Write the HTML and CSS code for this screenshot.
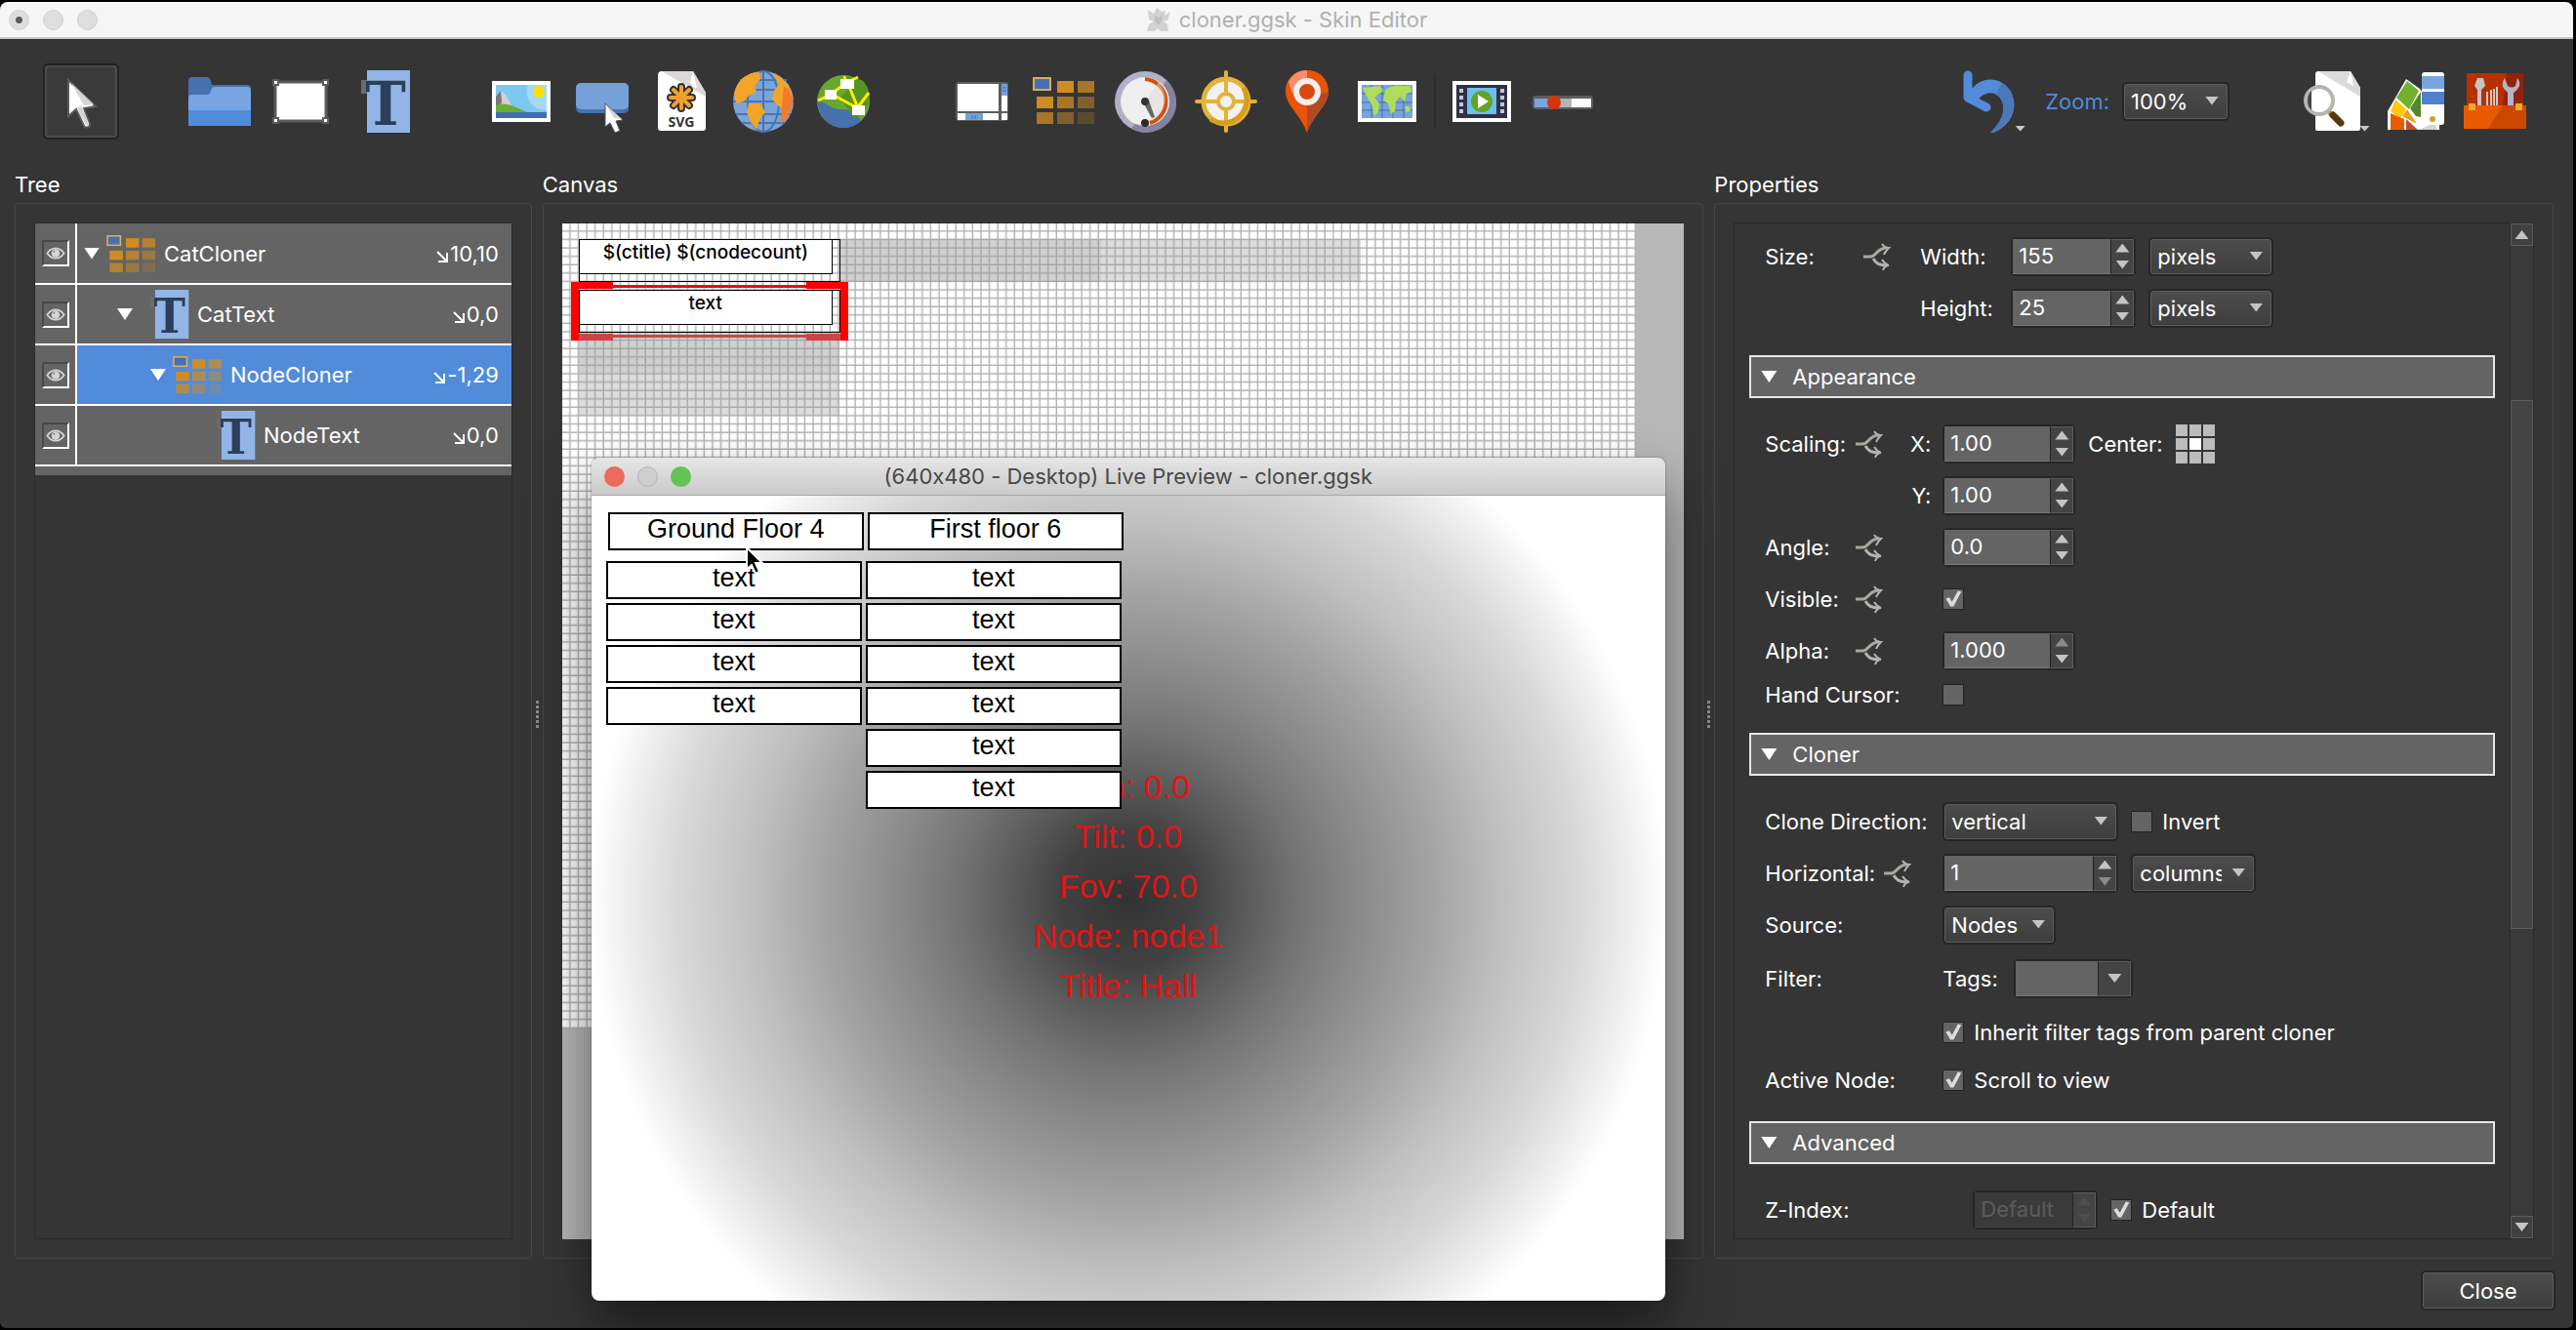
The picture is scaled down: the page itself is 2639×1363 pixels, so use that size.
FILE: index.html
```html
<!DOCTYPE html>
<html lang="en">
<head>
    <meta charset="UTF-8">
    <meta name="viewport" content="width=device-width, initial-scale=1.0">
    <title>cloner.ggsk - Skin Editor</title>
    <link rel="stylesheet" href="styles.css">
</head>
<body>
    <!-- Shared icons -->
    <svg class="defs" width="0" height="0" aria-hidden="true">
        <symbol id="icon-cloner" viewBox="0 0 64 48">
            <g fill="#d08c22">
                <rect x="25" y="4" width="17" height="12"/>
                <rect x="46" y="4" width="17" height="12" opacity=".75"/>
                <rect x="4" y="20" width="17" height="12"/>
                <rect x="25" y="20" width="17" height="12" opacity=".75"/>
                <rect x="46" y="20" width="17" height="12" opacity=".5"/>
                <rect x="4" y="36" width="17" height="12" opacity=".75"/>
                <rect x="25" y="36" width="17" height="12" opacity=".5"/>
                <rect x="46" y="36" width="17" height="12" opacity=".25"/>
            </g>
            <rect x="1" y="1" width="17" height="12" fill="#4670b0" stroke="#d8ac60" stroke-width="2"/>
        </symbol>
        <symbol id="icon-text" viewBox="0 0 52 64">
            <rect x="8" y="0" width="44" height="64" fill="#92b5e8"/>
            <rect x="2" y="10" width="6" height="14" fill="#6c6c6c"/>
            <text x="27" y="56" text-anchor="middle" class="icon-t">T</text>
        </symbol>
        <symbol id="icon-branch" viewBox="0 0 30 28">
            <path d="M1 14h7c7 0 6-9 17-9" fill="none" stroke="#a8a89c" stroke-width="3"/>
            <path d="M11 16c3 5 6 7 14 7" fill="none" stroke="#b4b4b4" stroke-width="3"/>
            <path d="M20 1c2 3 4 4 7 4-2 2-4 4-5 7M20 17c2 3 4 5 7 6-3 0-5 2-6 5" fill="none" stroke="#b4b4b4" stroke-width="2"/>
        </symbol>
        <symbol id="icon-eye" viewBox="0 0 28 26">
            <path d="M4 13C9 5 19 5 24 13C19 21 9 21 4 13z" fill="none" stroke="#d4d4d4" stroke-width="2"/>
            <circle cx="14" cy="13" r="5" fill="#d4d4d4"/>
            <circle cx="12" cy="11" r="1" fill="#666"/>
        </symbol>
        <symbol id="icon-arrow" viewBox="0 0 16 16">
            <path d="M3 3l9 9M13 4v9H4" fill="none" stroke="#fff" stroke-width="2"/>
        </symbol>
    </svg>

    <div class="window">
        <header class="titlebar">
            <div class="lights"><span class="edited"></span><span></span><span></span></div>
            <h1 class="title">
                <svg width="26" height="26" viewBox="0 0 26 26" fill="#d2d2d2"><path d="M2 3l6 4 3-6 5 4 4-1-1 5 6-4-3 9-4 1 4 3 1 7h-8l-3-3-3 3H1l2-7 5-3-5-2z"/><path d="M9 9l4 2 4-3-1 7-3 4-4-4z" fill="#c0c0c0"/></svg>
                cloner.ggsk - Skin Editor
            </h1>
        </header>

        <nav class="toolbar" aria-label="Elements">
            <div class="tools">
                <button class="tool active" type="button" aria-label="Select">
                    <svg viewBox="0 0 64 64"><path d="M19 10v37l8-7 8 17c2 3 7 1 6-2l-6-16 12-2z" fill="#fff" stroke="#5c5c5c" stroke-width="2"/><path d="M22 13l13 23 10-1zM28 39l9 17c2 1 3 0 3-2l-8-18z" fill="#d8d4d4"/></svg>
                </button>
            </div>
            <div class="tools">
                <button class="tool" type="button" aria-label="Container">
                    <svg viewBox="0 0 64 64"><path d="M0 11q0-4 4-4h14q4 0 5 4l1 4h36q4 0 4 4v37H0z" fill="#4670b0"/><path d="M0 57V29q0-4 4-4h15q3 0 4-4t4-4h33q4 0 4 4v36z" fill="#78a4e2"/><path d="M0 41h64v16H0z" fill="#528bda"/></svg>
                </button>
                <button class="tool" type="button" aria-label="Rectangle">
                    <svg viewBox="0 0 64 64"><rect x="6" y="12" width="52" height="40" fill="#fff" stroke="#5c5c5c" stroke-width="3"/><g fill="#fff" stroke="#5c5c5c" stroke-width="2"><rect x="4" y="10" width="5" height="5"/><rect x="55" y="10" width="5" height="5"/><rect x="4" y="49" width="5" height="5"/><rect x="55" y="49" width="5" height="5"/></g></svg>
                </button>
                <button class="tool" type="button" aria-label="Text">
                    <svg viewBox="0 0 64 64"><use href="#icon-text" x="9" width="52" height="64"/></svg>
                </button>
            </div>
            <div class="tools">
                <button class="tool" type="button" aria-label="Image">
                    <svg viewBox="0 0 64 64"><rect x="3" y="11" width="60" height="42" fill="#fff"/><rect x="7" y="15" width="52" height="34" fill="#7cc8f2"/><path d="M40 15h19v26A19 19 0 0 1 40 15z" fill="#a4daf6"/><circle cx="51" cy="22" r="6" fill="#ffe000"/><path d="M7 28l5-7 5 4 11 20H7z" fill="#d0d0d0"/><path d="M7 27l5-6 1 12-6 7z" fill="#777"/><path d="M7 36c10-4 18 1 34 8H7z" fill="#6aae2e"/><path d="M7 43h52v6H7z" fill="#3f6fb2"/></svg>
                </button>
                <button class="tool" type="button" aria-label="Button">
                    <svg viewBox="0 0 64 64"><rect x="6" y="13" width="54" height="31" rx="5" fill="#4670b0"/><rect x="6" y="13" width="54" height="27" rx="5" fill="#75a0d8"/><path d="M36 34v24l5-4 5 10 5-2-4-10 7-1z" fill="#fff" stroke="#555" stroke-width="1"/><path d="M37 36l8 13 8 1z" fill="#d8d4d4"/></svg>
                </button>
                <button class="tool" type="button" aria-label="SVG">
                    <svg viewBox="0 0 64 64"><path d="M7 5q0-4 4-4h32l13 22v36q0 3-3 3H10q-3 0-3-3z" fill="#fff"/><path d="M11 1h32l13 22v4z" fill="#dcd8d8"/><path d="M43 1l-3 11q2 6 7 6z" fill="#fff"/>
                        <g stroke="#333" stroke-width="8" stroke-linecap="round"><path d="M31 17v22M20 28h22M23 20l16 16M39 20L23 36"/></g><g stroke="#f0a030" stroke-width="4" stroke-linecap="round"><path d="M31 17v22M20 28h22M23 20l16 16M39 20L23 36"/></g>
                        <text x="31" y="58" text-anchor="middle" class="icon-svg">SVG</text></svg>
                </button>
                <button class="tool" type="button" aria-label="Web element">
                    <svg viewBox="0 0 64 64"><circle cx="32" cy="32" r="31" fill="#7aa4da"/><g fill="none" stroke="#4c74ae" stroke-width="2"><path d="M32 1v62M3 20h58M1 32h62M4 45h56M8 10h48M10 54h44"/><ellipse cx="32" cy="32" rx="16" ry="31"/></g><path d="M2 24C5 10 15 2 28 2l1 7-6 7 2 6-8 4-5 6-8 2z" fill="#f4a426"/><path d="M17 34l12 0 5 9-6 7-3 11-6-8-4-10z" fill="#f4a426"/><path d="M41 3c12 4 19 13 21 24l-5 14-8-3-8-8 2-9 5-7z" fill="#f4a426"/><path d="M53 16c5 3 9 9 9 16-1 10-5 18-12 23l1-17z" fill="#ee7c2c"/></svg>
                </button>
                <button class="tool" type="button" aria-label="Node marker">
                    <svg viewBox="0 0 64 64"><circle cx="31" cy="32" r="27" fill="#66a82c"/><path d="M4 32c8-2 14 10 27 8 8 0 15 6 18 12C37 64 8 62 4 32z" fill="#4670ae"/><path d="M30 6l8 12-10 10 14 22c18-10 20-30 8-40z" fill="#559420"/><path d="M5 31l13-6 17-13 11 27M34 14l-2-8M34 13l12-6M45 39l12-16M18 24l28 15" fill="none" stroke="#ffee00" stroke-width="3"/><g fill="#fff"><rect x="12" y="20" width="12" height="10"/><rect x="28" y="9" width="14" height="10"/><rect x="40" y="36" width="13" height="10"/></g></svg>
                </button>
            </div>
            <div class="tools">
                <button class="tool" type="button" aria-label="Scroll area">
                    <svg viewBox="0 0 64 64"><rect x="4" y="12" width="54" height="40" rx="3" fill="#5c5c5c"/><g fill="#fff"><rect x="6" y="14" width="42" height="28"/><rect x="51" y="14" width="6" height="28"/><rect x="6" y="44" width="42" height="7"/><rect x="51" y="44" width="6" height="7"/></g><path d="M51 14h6v12h-6zM14 44h18v7H14z" fill="#75a0d8"/><path d="M52 18h4M52 21h4M21 46v4M24 46v4" stroke="#3f6fb2"/></svg>
                </button>
                <button class="tool" type="button" aria-label="Cloner">
                    <svg viewBox="0 0 64 64"><use href="#icon-cloner" x="0" y="7" width="64" height="48"/></svg>
                </button>
                <button class="tool" type="button" aria-label="Gauge">
                    <svg viewBox="0 0 64 64"><circle cx="32" cy="32" r="31" fill="#b0b0c8"/><path d="M54 10A31 31 0 0 1 18 60z" fill="#8484a0"/><circle cx="32" cy="32" r="25" fill="#f0eeee"/><path d="M32 9a23 23 0 0 1 5 45" fill="none" stroke="#d4500c" stroke-width="4"/><path d="M32 32L46 12q16 22-7 40z" fill="#dcdada" opacity=".5"/><path d="M30 33l9 16 3-1-6-17z" fill="#666"/><circle cx="32" cy="32" r="4" fill="#333"/><circle cx="32" cy="54" r="4" fill="#2c2c2c"/></svg>
                </button>
                <button class="tool" type="button" aria-label="Target">
                    <svg viewBox="0 0 64 64"><circle cx="32" cy="32" r="23" fill="#f4f2f0" stroke="#e2b23c" stroke-width="5"/><path d="M32 2v60M2 32h60" stroke="#e2b23c" stroke-width="4" stroke-linecap="round"/><path d="M50 18a24 24 0 0 1-34 32" fill="none" stroke="#d89c18" stroke-width="5"/><circle cx="32" cy="32" r="8" fill="#f4f2f0" stroke="#e2b23c" stroke-width="4"/></svg>
                </button>
                <button class="tool" type="button" aria-label="Map pin">
                    <svg viewBox="0 0 64 64"><path d="M32 0c13 0 22 9 22 22 0 14-16 24-22 42C26 46 10 36 10 22 10 9 19 0 32 0z" fill="#e85408"/><path d="M54 22c0 14-16 24-22 42V36l15-12z" fill="#b04a22"/><path d="M13 12Q19 0 32 0v10L17 24z" fill="#ff8c70"/><circle cx="32" cy="22" r="11" fill="#d84a10" stroke="#f4eeee" stroke-width="6"/></svg>
                </button>
                <button class="tool" type="button" aria-label="Map">
                    <svg viewBox="0 0 64 64"><rect x="1" y="11" width="60" height="42" fill="#fff"/><rect x="5" y="15" width="52" height="34" fill="#78a4d8"/><path d="M15 15v34M26 15v34M37 15v34M48 15v34M5 24h52M5 33h52M5 41h52" stroke="#4670ae"/><path d="M6 18l18-2 3 5-9 7 5 6-1 9-4 4-3-12-6-10zM29 20l8-4 18 0 1 6-5 2-2 8-5-5-4 5-1 10-4 3-3-11-5-3zM49 37l5 0 1 5-5 1z" fill="#aedc5c"/></svg>
                </button>
            </div>
            <div class="separator"></div>
            <div class="tools">
                <button class="tool" type="button" aria-label="Video">
                    <svg viewBox="0 0 64 64"><rect x="2" y="11" width="60" height="42" fill="#fff"/><rect x="6" y="15" width="52" height="34" fill="#30304a"/><path d="M11 19v28M53 19v28" stroke="#c4c4d4" stroke-width="4" stroke-dasharray="4 3"/><rect x="17" y="18" width="30" height="27" fill="#6cc0ec"/><circle cx="32" cy="32" r="11" fill="#62a424"/><path d="M28 25l11 7-11 7z" fill="#fff"/></svg>
                </button>
                <button class="tool" type="button" aria-label="Seekbar">
                    <svg viewBox="0 0 64 64"><rect x="1" y="26" width="62" height="14" rx="3" fill="#5c5c5c"/><rect x="3" y="29" width="58" height="9" fill="#fff"/><path d="M3 29h20v9H3z" fill="#78a4e2"/><path d="M23 29h18v9H23z" fill="#b4b4b4"/><ellipse cx="23" cy="33" rx="7" ry="7" fill="#d83404"/></svg>
                </button>
            </div>

            <div class="tools tools-right">
                <button class="tool has-menu" type="button" aria-label="Undo">
                    <svg viewBox="0 0 64 64"><path d="M12 24C22 4 46 6 55 22C65 42 52 60 32 66C45 54 50 42 46 32C41 20 29 21 20 31z" fill="#528bda"/><path d="M46 13C64 24 64 54 32 66C45 54 50 42 46 32Q43 26 39 25z" fill="#4a78b8"/><path d="M11 5v23l19 10" fill="none" stroke="#528bda" stroke-width="9" stroke-linecap="round" stroke-linejoin="round"/></svg>
                </button>
                <label class="zoom-label" for="zoom">Zoom:</label>
                <span class="select zoom-select"><select id="zoom"><option>100%</option></select></span>
                <button class="tool has-menu" type="button" aria-label="Preview">
                    <svg viewBox="0 0 64 64"><path d="M14 4q0-3 3-3h33l10 17v42q0 2-2 2H16q-2 0-2-2z" fill="#fff"/><path d="M17 1h33l10 17v9z" fill="#dcdada"/><path d="M50 1l-4 11 7 4z" fill="#fff"/><circle cx="18" cy="31" r="14" fill="#fff" stroke="#b4b4b0" stroke-width="4"/><path d="M10 21v20q-4-4-4-10t4-10z" fill="#444"/><path d="M28 43l5 4" stroke="#c0962c" stroke-width="5"/><path d="M32 46l8 8" stroke="#5a3810" stroke-width="7" stroke-linecap="round"/></svg>
                </button>
                <button class="tool" type="button" aria-label="Colors">
                    <svg viewBox="0 0 64 64"><path d="M5 61V42L24 9l14 10 20 30v12z" fill="#fff"/><path d="M25 11l12 10-10 19-13-12z" fill="#72b030"/><path d="M39 22v26l-5-1-6-8z" fill="#54862a"/><path d="M13 30l11 10-6 9-10-7z" fill="#ffc800"/><path d="M25 40l10 15-15-8z" fill="#e8a01c"/><path d="M8 44l14 6v11H8z" fill="#e85c08"/><path d="M24 50l12 11H24z" fill="#c05030"/><path d="M37 61l18-8v8z" fill="#d4d4d4"/><rect x="40" y="2" width="23" height="54" rx="3" fill="#fff"/><path d="M40 6h23v13H40z" fill="#78a4e2"/><path d="M40 22h23v13H40z" fill="#5080d0"/><circle cx="51" cy="50" r="3" fill="#d8a020"/></svg>
                </button>
                <button class="tool" type="button" aria-label="Toolbox">
                    <svg viewBox="0 0 64 64"><path d="M3 3h58v33H3z" fill="#b83000"/><path d="M44 3h17v33H40z" fill="#902408"/><path d="M14 8h6l2 8-4 4v16h-4V20l-3-4z" fill="#c8c4c4"/><path d="M24 22v14M28 20v16M31 19v17M34 17v19" stroke="#d0c8c8" stroke-width="2"/><path d="M42 8q-6 8 3 15v13h6V23q10-7 4-15l-2 8q-4 3-8 0z" fill="#b4b4cc"/><path d="M0 36h64v24H0z" fill="#e85a00"/><path d="M40 36h24v24H25z" fill="#cc4800"/><path d="M5 34h7v7H5zM53 34h7v7h-7z" fill="#f0a828"/></svg>
                </button>
            </div>
        </nav>

        <main class="panels">
            <section class="panel">
                <h2>Tree</h2>
                <div class="group">
                    <div class="well">
                        <table class="tree">
                            <tr>
                                <td class="eye"><button type="button" aria-label="Toggle CatCloner"><svg><use href="#icon-eye"/></svg></button></td>
                                <td><div class="node level-0"><span class="twisty"></span><svg class="node-cloner"><use href="#icon-cloner"/></svg>CatCloner</div></td>
                                <td class="pos"><svg><use href="#icon-arrow"/></svg>10,10</td>
                            </tr>
                            <tr>
                                <td class="eye"><button type="button" aria-label="Toggle CatText"><svg><use href="#icon-eye"/></svg></button></td>
                                <td><div class="node level-1"><span class="twisty"></span><svg class="node-text"><use href="#icon-text"/></svg>CatText</div></td>
                                <td class="pos"><svg><use href="#icon-arrow"/></svg>0,0</td>
                            </tr>
                            <tr class="selected">
                                <td class="eye"><button type="button" aria-label="Toggle NodeCloner"><svg><use href="#icon-eye"/></svg></button></td>
                                <td><div class="node level-2"><span class="twisty"></span><svg class="node-cloner"><use href="#icon-cloner"/></svg>NodeCloner</div></td>
                                <td class="pos"><svg><use href="#icon-arrow"/></svg>-1,29</td>
                            </tr>
                            <tr>
                                <td class="eye"><button type="button" aria-label="Toggle NodeText"><svg><use href="#icon-eye"/></svg></button></td>
                                <td><div class="node level-3"><span class="twisty leaf"></span><svg class="node-text"><use href="#icon-text"/></svg>NodeText</div></td>
                                <td class="pos"><svg><use href="#icon-arrow"/></svg>0,0</td>
                            </tr>
                        </table>
                        <div class="tree-end"></div>
                    </div>
                </div>
            </section>

            <div class="splitter"></div>

            <section class="panel">
                <h2>Canvas</h2>
                <div class="group">
                    <div class="viewport">
                        <!-- Skin area with a 5 pixel grid -->
                        <div class="skin">
                            <svg class="grid" viewBox="0 0 640 480" preserveAspectRatio="none">
                                <defs><pattern id="cell" width="5" height="5" patternUnits="userSpaceOnUse"><path d="M5 0V5H0" fill="none" stroke="#b0b0b0" stroke-width="1.6"/></pattern></defs>
                                <rect width="640" height="480" fill="#fff"/>
                                <rect width="640" height="480" fill="url(#cell)"/>
                            </svg>
                            <div class="ghost ghost-right-1"></div>
                            <div class="ghost ghost-right-2"></div>
                            <div class="ghost ghost-down-1"></div>
                            <div class="ghost ghost-down-2"></div>
                            <div class="cloner-box cat"><div class="skin-text">$(ctitle) $(cnodecount)</div></div>
                            <div class="cloner-box nodes"><div class="skin-text">text</div></div>
                            <svg class="selection" width="284" height="60" viewBox="0 0 284 60">
                                <path d="M0 0h43v7H8v53H0zM284 0h-43v7h35v53h8z" fill="#fe0000"/>
                                <path d="M43 3h198v3H43z" fill="#e01010"/>
                                <path d="M8 53h35v7H8zM241 53h35v7h-35zM43 54h198v3H43z" fill="#cc4444"/>
                            </svg>
                        </div>

                        <!-- Live preview window -->
                        <div class="preview">
                            <div class="preview-bar">
                                <span class="light red"></span><span class="light grey"></span><span class="light green"></span>
                                <span class="preview-title">(640x480 - Desktop) Live Preview - cloner.ggsk</span>
                            </div>
                            <div class="preview-body">
                                <div class="info">
                                    <p>Pan: 0.0</p>
                                    <p>Tilt: 0.0</p>
                                    <p>Fov: 70.0</p>
                                    <p>Node: node1</p>
                                    <p>Title: Hall</p>
                                </div>
                                <div class="categories">
                                    <div class="category">
                                        <div class="cell head">Ground Floor 4</div>
                                        <div class="cell">text</div>
                                        <div class="cell">text</div>
                                        <div class="cell">text</div>
                                        <div class="cell">text</div>
                                    </div>
                                    <div class="category">
                                        <div class="cell head">First floor 6</div>
                                        <div class="cell">text</div>
                                        <div class="cell">text</div>
                                        <div class="cell">text</div>
                                        <div class="cell">text</div>
                                        <div class="cell">text</div>
                                        <div class="cell">text</div>
                                    </div>
                                </div>
                                <svg class="cursor" width="20" height="30" viewBox="0 0 20 30"><path d="M2 1v22l5-4 4 9 4-2-4-9h7z" fill="#000" stroke="#fff" stroke-width="2"/></svg>
                            </div>
                        </div>
                    </div>
                </div>
            </section>

            <div class="splitter"></div>

            <section class="panel">
                <h2>Properties</h2>
                <div class="group">
                    <div class="well props">
                        <form class="form">
                            <div class="rows first">
                                <div class="row size">
                                    <div class="name"><span class="caption">Size:</span><svg class="branch"><use href="#icon-branch"/></svg></div>
                                    <label class="dimension" for="width">Width:</label>
                                    <span class="spin w-128"><input id="width" type="number" value="155"><span class="steps"><button type="button" aria-label="Increase"></button><button type="button" aria-label="Decrease"></button></span></span>
                                    <span class="select w-128"><select aria-label="Width unit"><option>pixels</option></select></span>
                                </div>
                                <div class="row size">
                                    <div class="name"></div>
                                    <label class="dimension" for="height">Height:</label>
                                    <span class="spin w-128"><input id="height" type="number" value="25"><span class="steps"><button type="button" aria-label="Increase"></button><button type="button" aria-label="Decrease"></button></span></span>
                                    <span class="select w-128"><select aria-label="Height unit"><option>pixels</option></select></span>
                                </div>
                            </div>

                            <button class="section-head" type="button"><span class="twisty"></span>Appearance</button>
                            <div class="rows">
                                <div class="row">
                                    <div class="name"><span class="caption">Scaling:</span><svg class="branch"><use href="#icon-branch"/></svg><label class="axis" for="scale-x">X:</label></div>
                                    <span class="spin w-136"><input id="scale-x" type="number" step="0.01" value="1.00"><span class="steps"><button type="button" aria-label="Increase"></button><button type="button" aria-label="Decrease"></button></span></span>
                                    <span>Center:</span>
                                    <button class="anchor" type="button" aria-label="Center"><i></i><i></i><i></i><i></i><i class="on"></i><i></i><i></i><i></i><i></i></button>
                                </div>
                                <div class="row">
                                    <div class="name"><label class="axis" for="scale-y">Y:</label></div>
                                    <span class="spin w-136"><input id="scale-y" type="number" step="0.01" value="1.00"><span class="steps"><button type="button" aria-label="Increase"></button><button type="button" aria-label="Decrease"></button></span></span>
                                </div>
                                <div class="row">
                                    <div class="name"><label class="caption" for="angle">Angle:</label><svg class="branch"><use href="#icon-branch"/></svg></div>
                                    <span class="spin w-136"><input id="angle" type="number" step="0.1" value="0.0"><span class="steps"><button type="button" aria-label="Increase"></button><button type="button" aria-label="Decrease"></button></span></span>
                                </div>
                                <div class="row">
                                    <div class="name"><label class="caption" for="visible">Visible:</label><svg class="branch"><use href="#icon-branch"/></svg></div>
                                    <input id="visible" type="checkbox" checked>
                                </div>
                                <div class="row">
                                    <div class="name"><label class="caption" for="alpha">Alpha:</label><svg class="branch"><use href="#icon-branch"/></svg></div>
                                    <span class="spin w-136"><input id="alpha" type="number" step="0.001" value="1.000"><span class="steps"><button class="dim" type="button" aria-label="Increase"></button><button type="button" aria-label="Decrease"></button></span></span>
                                </div>
                                <div class="row short">
                                    <div class="name"><label class="caption" for="hand">Hand Cursor:</label></div>
                                    <input id="hand" type="checkbox">
                                </div>
                            </div>

                            <button class="section-head" type="button"><span class="twisty"></span>Cloner</button>
                            <div class="rows">
                                <div class="row">
                                    <div class="name"><label class="caption" for="direction">Clone Direction:</label></div>
                                    <span class="select w-180"><select id="direction"><option>vertical</option></select></span>
                                    <label class="check"><input type="checkbox">Invert</label>
                                </div>
                                <div class="row">
                                    <div class="name"><label class="caption" for="horizontal">Horizontal:</label><svg class="branch"><use href="#icon-branch"/></svg></div>
                                    <span class="spin w-180"><input id="horizontal" type="number" value="1"><span class="steps"><button type="button" aria-label="Increase"></button><button class="dim" type="button" aria-label="Decrease"></button></span></span>
                                    <span class="select w-128"><select aria-label="Horizontal unit"><option>columns</option></select></span>
                                </div>
                                <div class="row">
                                    <div class="name"><label class="caption" for="source">Source:</label></div>
                                    <span class="select w-116"><select id="source"><option>Nodes</option></select></span>
                                </div>
                                <div class="row tall">
                                    <div class="name"><span class="caption">Filter:</span></div>
                                    <label class="tags-label" for="tags">Tags:</label>
                                    <span class="combo"><input id="tags" type="text"><button type="button" aria-label="Show tags"></button></span>
                                </div>
                                <div class="row">
                                    <div class="name"></div>
                                    <label class="check"><input type="checkbox" checked>Inherit filter tags from parent cloner</label>
                                </div>
                                <div class="row medium">
                                    <div class="name"><span class="caption">Active Node:</span></div>
                                    <label class="check"><input type="checkbox" checked>Scroll to view</label>
                                </div>
                            </div>

                            <button class="section-head" type="button"><span class="twisty"></span>Advanced</button>
                            <div class="rows last">
                                <div class="row">
                                    <div class="name wide"><label class="caption" for="z-index">Z-Index:</label></div>
                                    <span class="spin w-128 disabled"><input id="z-index" type="text" value="Default" disabled><span class="steps"><button type="button" aria-label="Increase" disabled></button><button type="button" aria-label="Decrease" disabled></button></span></span>
                                    <label class="check"><input type="checkbox" checked>Default</label>
                                </div>
                            </div>
                        </form>
                        <div class="scrollbar">
                            <button type="button" class="up" aria-label="Scroll up"></button>
                            <div class="track"><div class="thumb"></div></div>
                            <button type="button" class="down" aria-label="Scroll down"></button>
                        </div>
                    </div>
                </div>
            </section>
        </main>

        <footer class="footer">
            <button class="close" type="button">Close</button>
        </footer>
    </div>
</body>
</html>
```
FILE: styles.css
```css
* {
    box-sizing: border-box;
}
body {
    margin: 0;
    background: #000;
    color: #fff;
    font-family: Inter, "Noto Sans", sans-serif;
    font-size: 22px;
    font-variant-ligatures: no-contextual;
    line-height: 26px;
}
button, input, select {
    font: inherit;
    color: inherit;
    margin: 0;
    padding: 0;
    border: none;
    background: none;
}
h1, h2, p {
    margin: 0;
    font-size: inherit;
    font-weight: 400;
}
.defs {
    position: absolute;
}
.window {
    display: flex;
    flex-direction: column;
    min-height: calc(100vh - 4px);
    margin: 2px 3px 2px 0;
    background: #353535;
    border-radius: 8px 8px 6px 6px;
}

/* Title bar */
.titlebar {
    display: grid;
    grid-template-columns: 1fr auto 1fr;
    align-items: center;
    height: 38px;
    padding: 0 9px;
    background: #f6f6f6;
    border-bottom: 2px solid #c4c8c8;
    border-radius: 8px 8px 0 0;
}
.lights {
    display: flex;
    gap: 14px;
}
.lights span {
    width: 21px;
    height: 21px;
    border: 1px solid #d0d0d0;
    border-radius: 50%;
    background: #dedede;
}
.lights .edited {
    background: radial-gradient(circle, #5c5c5c 3px, #dedede 4px);
}
.title {
    display: flex;
    gap: 8px;
    color: #b0b0b0;
}

/* Toolbar */
.toolbar {
    display: flex;
    align-items: center;
    height: 127px;
    padding: 0 41px 0 44px;
}
.tools {
    display: flex;
    align-items: center;
    gap: 5px;
}
.tools + .tools {
    margin-left: 64px;
}
.tool {
    position: relative;
    display: grid;
    place-items: center;
    width: 78px;
    height: 78px;
    border-radius: 5px;
}
.tool svg {
    width: 64px;
    height: 64px;
}
.tool.active {
    border: 2px solid #222;
    background: #3a3a3a;
    box-shadow: inset 0 0 0 2px #4c4c4c;
}
.has-menu::after {
    content: "";
    position: absolute;
    right: 1px;
    bottom: 8px;
    width: 11px;
    height: 6px;
    background: #c8c8c8;
    clip-path: polygon(0 0, 100% 0, 50% 100%);
}
.icon-t {
    font: bold 62px "DejaVu Serif Condensed", "DejaVu Serif", serif;
    fill: #2c3e58;
}
.icon-svg {
    font: bold 14px "Open Sans", sans-serif;
    fill: #333;
}
.separator {
    width: 2px;
    height: 56px;
    margin: 0 8px;
    background: #2c2c2c;
}
.tools.tools-right {
    margin-left: auto;
}
.zoom-label {
    margin-left: 14px;
    color: #528bda;
}
.zoom-select {
    width: 110px;
    margin: 0 62px 0 8px;
}

/* Panels */
.panels {
    flex: 1;
    display: grid;
    grid-template-columns: 530fr 11px 1190fr 11px 860fr;
    padding: 9px 20px 0 15px;
}
.panel {
    display: flex;
    flex-direction: column;
    min-width: 0;
}
.panel h2 {
    height: 32px;
}
.group {
    flex: 1;
    display: flex;
    padding: 19px;
    border: 1px solid #464646;
    border-radius: 4px;
}
.well {
    flex: 1;
    border: 1px solid #2a2a2a;
}
.splitter {
    align-self: center;
    justify-self: center;
    width: 3px;
    height: 30px;
    background: repeating-linear-gradient(#8a8a8a 0 3px, transparent 3px 5px);
}

/* Tree */
.tree {
    width: 100%;
    border-collapse: collapse;
    background: #646464;
    font-size: 22px;
}
.tree tr {
    height: 62px;
    border-bottom: 2px solid #fff;
}
.tree td {
    padding: 0;
}
.tree .selected td {
    background: #528bda;
}
.tree .selected .eye {
    background: #646464;
}
.tree .eye {
    width: 42px;
    border-right: 2px solid #fff;
}
.eye button {
    display: block;
    width: 28px;
    height: 27px;
    margin: 0 auto;
    border: 2px solid #484848;
    border-right-color: #fff;
    border-bottom-color: #fff;
}
.eye svg {
    display: block;
    width: 24px;
    height: 23px;
}
.node {
    display: flex;
    align-items: center;
    padding-left: 7px;
}
.level-1 {
    padding-left: 41px;
}
.level-2 {
    padding-left: 75px;
}
.level-3 {
    padding-left: 109px;
}
.twisty {
    width: 16px;
    height: 12px;
    background: #fff;
    clip-path: polygon(0 0, 100% 0, 50% 100%);
}
.twisty.leaf {
    background: none;
}
.node-cloner {
    width: 51px;
    height: 38px;
    margin: 0 8px 0 7px;
}
.node-text {
    width: 42px;
    height: 50px;
    margin: 0 8px 0 16px;
}
.tree .pos {
    padding-right: 13px;
    text-align: right;
}
.pos svg {
    width: 16px;
    height: 16px;
    vertical-align: -3px;
}
.tree-end {
    height: 9px;
    background: #646464;
}

/* Canvas */
.viewport {
    position: relative;
    flex: 1;
    background: #b8b8b8;
    border-top: 1px solid #2a2a2a;
}
.skin {
    position: relative;
    width: 1100px;
    height: 825px;
}
.grid {
    display: block;
    width: 100%;
    height: 100%;
}
.ghost,
.cloner-box,
.selection {
    position: absolute;
}
.ghost {
    background: rgba(150, 150, 150, 0.45);
}
.ghost-right-1 {
    left: 284px;
    top: 16px;
    width: 268px;
    height: 44px;
}
.ghost-right-2 {
    left: 552px;
    top: 16px;
    width: 266px;
    height: 44px;
    opacity: 0.75;
}
.ghost-down-1 {
    left: 17px;
    top: 111px;
    width: 267px;
    height: 42px;
}
.ghost-down-2 {
    left: 17px;
    top: 153px;
    width: 267px;
    height: 44px;
    opacity: 0.75;
}
.cloner-box {
    left: 17px;
    width: 268px;
    height: 44px;
    border: 1px solid #000;
}
.cloner-box.cat {
    top: 16px;
}
.cloner-box.nodes {
    top: 68px;
}
.skin-text {
    width: 260px;
    height: 36px;
    margin: -1px;
    border: 1px solid #000;
    background: #fff;
    color: #000;
    font-size: 19px;
    font-weight: 500;
    text-align: center;
}
.selection {
    left: 9px;
    top: 60px;
}

/* Live preview */
.preview {
    position: absolute;
    left: 30px;
    top: 240px;
    width: 1100px;
    border-radius: 8px;
    overflow: hidden;
    box-shadow: 0 30px 60px rgba(0, 0, 0, 0.5), 0 0 2px rgba(0, 0, 0, 0.5);
}
.preview-bar {
    position: relative;
    display: flex;
    align-items: center;
    gap: 13px;
    height: 39px;
    padding-left: 13px;
    background: linear-gradient(#e6e6e6, #cacaca);
    border-bottom: 1px solid #a8a8a8;
}
.light {
    width: 21px;
    height: 21px;
    border-radius: 50%;
}
.light.red {
    background: #ed6a5e;
}
.light.grey {
    background: #cecece;
    border: 1px solid #b4b4b4;
}
.light.green {
    background: #61c554;
}
.preview-title {
    position: absolute;
    inset: 0;
    line-height: 39px;
    text-align: center;
    color: #484848;
}
.preview-body {
    position: relative;
    height: 825px;
    background: radial-gradient(circle 550px at 50% 50%, #323232 0, #424242 13%, #585858 21%, #747474 32%, #888 42%, #a4a4a4 57%, #c0c0c0 70%, #d8d8d8 84%, #f2f2f2 95%, #fff 100%);
    font-family: "Liberation Sans", Arial, sans-serif;
}
.info {
    position: absolute;
    inset: 273px 0 auto;
    color: #e01414;
    font-size: 34px;
    line-height: 51px;
    text-align: center;
}
.categories {
    position: relative;
    display: flex;
    align-items: flex-start;
    gap: 4px;
    padding: 17px 15px;
}
.category {
    display: flex;
    flex-direction: column;
    gap: 4px;
    width: 262px;
}
.cell {
    height: 39px;
    border: 2px solid #000;
    background: #fff;
    color: #000;
    font-size: 27px;
    line-height: 31px;
    text-align: center;
}
.cell.head {
    margin: 0 -2px 7px 2px;
}
.cursor {
    position: absolute;
    left: 157px;
    top: 52px;
}

/* Properties */
.props {
    display: flex;
    min-width: 0;
}
.form {
    flex: 1;
    padding: 0 15px;
}
.rows {
    padding: 20px 16px;
}
.rows.first {
    padding-top: 7px;
    padding-bottom: 22px;
}
.rows.last {
    padding-bottom: 0;
}
.row {
    display: flex;
    align-items: center;
    gap: 13px;
    height: 53px;
}
.row.short {
    height: 38px;
}
.row.medium {
    height: 45px;
}
.row.tall {
    height: 57px;
}
.name {
    display: flex;
    align-items: center;
    gap: 8px;
    flex: none;
    width: 182px;
    margin-right: -13px;
    white-space: nowrap;
}
.name.wide {
    width: 213px;
}
.caption {
    min-width: 84px;
}
.size .name {
    width: 159px;
}
.size .caption {
    min-width: 92px;
}
.dimension {
    width: 93px;
    margin-right: -13px;
}
.axis {
    margin-left: auto;
    margin-right: 12px;
}
.branch {
    width: 30px;
    height: 28px;
}
.w-116 {
    width: 116px;
}
.w-128 {
    width: 128px;
}
.w-136 {
    width: 136px;
}
.w-180 {
    width: 180px;
}
.spin,
.select,
.combo {
    position: relative;
    display: flex;
    flex: none;
    height: 40px;
    border: 2px solid #262626;
    border-radius: 5px;
}
.spin input,
.combo input {
    flex: 1;
    min-width: 0;
    padding-left: 6px;
    background: #646464;
    border-bottom: 1px solid #777;
    appearance: textfield;
}
.spin input::-webkit-inner-spin-button {
    display: none;
}
.steps {
    display: flex;
    flex-direction: column;
    width: 24px;
    border: 1px solid #5c5c5c;
    border-left: 1px solid #222;
    background: #444;
}
.steps button {
    flex: 1;
    display: grid;
    place-items: center;
}
.steps button::after,
.select::after,
.combo button::after,
.scrollbar button::after {
    content: "";
    width: 14px;
    height: 9px;
    background: #c4c4c4;
    clip-path: polygon(0 0, 100% 0, 50% 100%);
}
.steps button:first-child::after,
.scrollbar .up::after {
    clip-path: polygon(50% 0, 100% 100%, 0 100%);
}
.steps .dim::after {
    background: #8a8a8a;
}
.disabled input {
    background: #3a3a3a;
    border-color: #444;
    color: #5c5c5c;
}
.disabled .steps button::after {
    background: #4e4e4e;
}
.select select {
    width: 100%;
    padding: 0 32px 0 6px;
    border: 1px solid #5c5c5c;
    border-radius: 3px;
    background: linear-gradient(#4c4c4c, #3e3e3e);
    appearance: none;
}
.select::after {
    position: absolute;
    right: 9px;
    top: 13px;
    pointer-events: none;
}
.combo {
    width: 122px;
}
.combo button {
    display: grid;
    place-items: center;
    width: 34px;
    border: 1px solid #5c5c5c;
    border-left-color: #222;
    background: #444;
}
.tags-label {
    width: 60px;
}
input[type="checkbox"] {
    flex: none;
    width: 22px;
    height: 22px;
    border: 1px solid #222;
    background: #646464;
    appearance: none;
}
input[type="checkbox"]:checked::after {
    content: "";
    display: block;
    width: 20px;
    height: 20px;
    background: #dcdcdc;
    clip-path: polygon(10% 50%, 28% 44%, 42% 66%, 72% 10%, 90% 14%, 50% 90%, 34% 90%);
}
.check {
    display: flex;
    align-items: center;
    gap: 10px;
}
.anchor {
    display: grid;
    grid-template-columns: repeat(3, 12px);
    gap: 2px;
}
.anchor i {
    height: 12px;
    background: #bcbcbc;
}
.anchor .on {
    background: #fff;
}
.section-head {
    display: flex;
    align-items: center;
    gap: 16px;
    width: 100%;
    height: 44px;
    padding-left: 10px;
    border: 2px solid #e8e8e8;
    background: #646464;
}
.scrollbar {
    display: flex;
    flex-direction: column;
    width: 24px;
    border-left: 1px solid #2a2a2a;
}
.scrollbar button {
    display: grid;
    place-items: center;
    height: 23px;
    border: 1px solid #5c5c5c;
    background: #404040;
}
.track {
    flex: 1;
    padding-top: 158px;
    background: #3a3a3a;
}
.thumb {
    height: 542px;
    border: 1px solid #5c5c5c;
    background: #444;
}

/* Footer */
.footer {
    display: flex;
    justify-content: flex-end;
    padding: 12px 18px 18px;
}
.close {
    width: 138px;
    height: 41px;
    border: 2px solid #262626;
    border-radius: 5px;
    background: linear-gradient(#4c4c4c, #3e3e3e);
    box-shadow: inset 0 0 0 1px #5c5c5c;
}
```
